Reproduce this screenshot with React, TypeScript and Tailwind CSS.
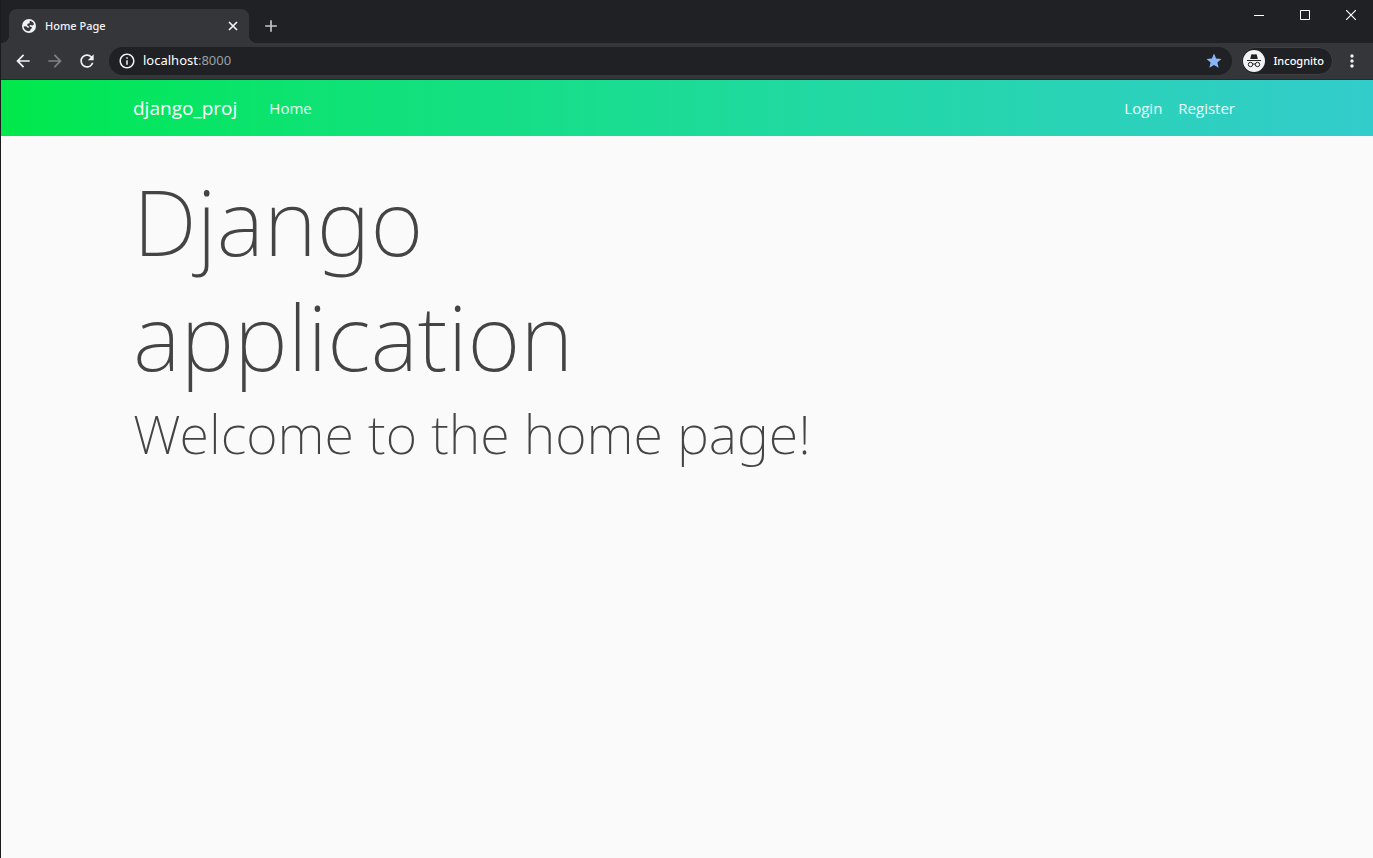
import {
  MdArrowBack,
  MdArrowForward,
  MdRefresh,
  MdInfoOutline,
  MdStar,
  MdMoreVert,
  MdAdd,
} from 'react-icons/md';

function GlobeIcon() {
  return (
    <svg viewBox="0 0 16 16" className="size-4 shrink-0" aria-hidden="true">
      <circle cx="8" cy="8" r="7" fill="#f1f3f4" />
      <path
        d="M8.800 2.800C11 3 12.600 4.500 13 6.300L11.500 7.500 9.800 7 8.400 7.600 8.800 8.600 10.600 8.900 11 10.300 9.600 11 9.300 12.600 7.600 13.300C4.800 13.200 2.700 11 2.700 8.300L5.600 8.500 6.600 9.800 8 9.700 7.600 8.300 6.100 7.400 6.600 5.800 8.600 5.200z"
        fill="#35363a"
      />
    </svg>
  );
}

function IncognitoIcon() {
  return (
    <svg viewBox="0 0 22 22" className="size-[22px] shrink-0" aria-hidden="true">
      <circle cx="11" cy="11" r="11" fill="#f1f3f4" />
      <path d="M7.200 9 8.200 4.800q.2-.8 1-.6l1.800.4 1.800-.4q.8-.2 1 .6L14.800 9z" fill="#202124" />
      <path d="M4 10.500h14" stroke="#202124" strokeWidth="1" />
      <g fill="none" stroke="#202124" strokeWidth="1">
        <circle cx="7.500" cy="14.500" r="2.200" />
        <circle cx="14.500" cy="14.500" r="2.200" />
        <path d="M9.700 14.300q1.300-.8 2.600 0" />
      </g>
    </svg>
  );
}

function TabStrip() {
  return (
    <div className="flex h-[43px] items-end bg-[#202124] pl-2">
      <div className="relative flex h-[34px] w-[240px] items-center rounded-t-lg bg-[#35363a] pr-2 pl-3">
        <span className="absolute bottom-0 -left-2 size-2 bg-[radial-gradient(circle_at_0_0,#202124_8px,#35363a_8px)]" />
        <span className="absolute -right-2 bottom-0 size-2 bg-[radial-gradient(circle_at_100%_0,#202124_8px,#35363a_8px)]" />
        <GlobeIcon />
        <span className="ml-2 flex-1 text-[11px] font-medium text-[#f1f3f4]">Home Page</span>
        <button aria-label="Close tab" className="flex size-4 items-center justify-center text-[#f1f3f4]">
          <svg viewBox="0 0 10 10" className="size-[10px]">
            <path d="m1 1 8 8M9 1 1 9" stroke="currentColor" strokeWidth="1.700" />
          </svg>
        </button>
      </div>
      <button aria-label="New tab" className="ml-3 flex h-[34px] w-5 items-center justify-center text-[#c5c6c8]">
        <MdAdd size={20} />
      </button>
      <div className="ml-auto flex self-start text-white">
        <button aria-label="Minimize" className="flex h-[30px] w-[46px] items-center justify-center">
          <svg viewBox="0 0 10 10" className="size-[10px]">
            <path d="M0 5.500h10" stroke="currentColor" />
          </svg>
        </button>
        <button aria-label="Maximize" className="flex h-[30px] w-[46px] items-center justify-center">
          <svg viewBox="0 0 10 10" className="size-[10px]">
            <path d="M.5.5h9v9h-9z" fill="none" stroke="currentColor" />
          </svg>
        </button>
        <button aria-label="Close window" className="flex h-[30px] w-[45px] items-center justify-center">
          <svg viewBox="0 0 10 10" className="size-[10px]">
            <path d="m0 0 10 10M10 0 0 10" stroke="currentColor" strokeWidth="1.200" />
          </svg>
        </button>
      </div>
    </div>
  );
}

function Toolbar() {
  return (
    <div className="flex h-[37px] items-center border-b border-[#28292c] bg-[#35363a] px-3 text-[#f1f3f4]">
      <div className="flex gap-3">
        <button aria-label="Back">
          <MdArrowBack size={20} />
        </button>
        <button aria-label="Forward" className="text-[#808184]">
          <MdArrowForward size={20} />
        </button>
        <button aria-label="Reload">
          <MdRefresh size={20} />
        </button>
      </div>
      <div className="ml-3 flex h-7 flex-1 items-center rounded-full bg-[#202124] px-[9px]">
        <MdInfoOutline size={18} />
        <span className="ml-[7px] flex-1 text-[13px] text-white">
          localhost<span className="text-[#9aa0a6]">:8000</span>
        </span>
        <button aria-label="Bookmark this page" className="text-[#8ab4f8]">
          <MdStar size={18} />
        </button>
      </div>
      <button className="ml-[9px] flex h-7 items-center gap-2 rounded-full border border-[#3f4043] bg-[#202124] pr-2 pl-px text-[11px] font-medium text-white">
        <IncognitoIcon />
        Incognito
      </button>
      <button aria-label="Menu" className="-mr-px ml-[9px]">
        <MdMoreVert size={20} />
      </button>
    </div>
  );
}

export default function App() {
  return (
    <div className="flex min-h-screen flex-col border-l border-[#1b1b1d] bg-[#fafafa] font-['Noto_Sans',sans-serif]">
      <header>
        <TabStrip />
        <Toolbar />
      </header>
      <nav className="bg-linear-to-r from-[#00e84a] to-[#33cccc]">
        <div className="mx-auto flex h-14 max-w-[1140px] items-center px-4 pt-px font-['Open_Sans',sans-serif] text-[15px] text-white/90">
          <a href="#" className="mr-8 text-[19px] text-white">
            django_proj
          </a>
          <a href="#">Home</a>
          <div className="mr-[6px] ml-auto flex gap-4">
            <a href="#">Login</a>
            <a href="#">Register</a>
          </div>
        </div>
      </nav>
      <main className="mx-auto w-full max-w-[1140px] px-4 pt-7 text-[#444444]">
        <h1 className="text-[91px] leading-[115px] font-extralight">
          Django
          <br />
          application
        </h1>
        <p className="mt-[6px] text-[54px] leading-[67px] font-extralight">Welcome to the home page!</p>
      </main>
    </div>
  );
}
